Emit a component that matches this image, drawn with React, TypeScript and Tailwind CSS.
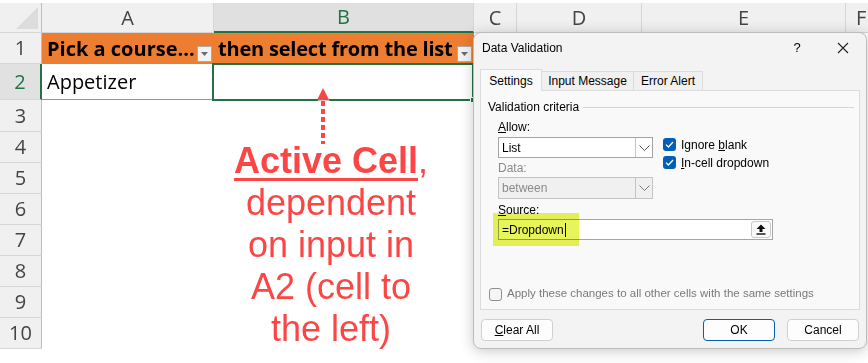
import React from "react";

const SHEET_FONT = { fontFamily: '"Open Sans", "Noto Sans", sans-serif' };
const UI_FONT = { fontFamily: '"Liberation Sans", Arial, sans-serif' };

function Chevron({ color = "#555" }: { color?: string }) {
  return (
    <svg width="11" height="6" viewBox="0 0 11 6">
      <path d="M0.5 0.5 L5.5 5.5 L10.5 0.5" fill="none" stroke={color} strokeWidth="1" />
    </svg>
  );
}

function CheckBox({ checked }: { checked: boolean }) {
  if (checked) {
    return (
      <div className="w-[13px] h-[13px] rounded-[3px] bg-[#005fb8] flex items-center justify-center shrink-0">
        <svg width="9" height="7" viewBox="0 0 9 7">
          <path d="M1 3.6 L3.4 6 L8 1" fill="none" stroke="#fff" strokeWidth="1.3" />
        </svg>
      </div>
    );
  }
  return <div className="w-[13px] h-[13px] rounded-[3px] border border-[#8f8f8f] bg-[#f5f5f5] shrink-0" />;
}

function FilterBtn() {
  return (
    <div className="w-[15px] h-[16px] bg-[#f3f3f3] border border-[#a9a9a9] flex items-center justify-center shrink-0 self-end mb-[2px] mr-[2px]">
      <svg width="7" height="4" viewBox="0 0 7 4">
        <path d="M0 0 L7 0 L3.5 4 Z" fill="#6b6b6b" />
      </svg>
    </div>
  );
}

const colHead = "bg-[#f0f0f0] border-r border-b border-[#d6d6d6] flex items-center justify-center text-[20px] text-[#444] leading-none";
const rowHead = "bg-[#f0f0f0] border-r border-r-[#bdbdbd] border-b border-b-[#d6d6d6] flex items-center justify-center text-[20px] text-[#444] leading-none";

function Sheet() {
  const rows = [3, 4, 5, 6, 7, 8, 9, 10];
  return (
    <div className="pt-[3px]" style={SHEET_FONT}>
      <div className="grid grid-cols-[42px_172px_260px_43px_125px_204px_22px] grid-rows-[30px_31px_36px_32px_repeat(7,31px)]">
        <div className="bg-[#f0f0f0] border-r border-r-[#bdbdbd] border-b border-b-[#d6d6d6] relative">
          <svg className="absolute right-[3px] bottom-[3px]" width="22" height="22" viewBox="0 0 22 22">
            <path d="M22 0 L22 22 L0 22 Z" fill="#dcdcdc" />
          </svg>
        </div>
        <div className={colHead}>A</div>
        <div className="bg-[#e0e0e0] border-r border-[#d6d6d6] border-b-2 border-b-[#217346] flex items-center justify-center text-[20px] text-[#217346] leading-none">B</div>
        <div className={colHead}>C</div>
        <div className={colHead}>D</div>
        <div className={colHead}>E</div>
        <div className="bg-[#f0f0f0] border-b border-[#d6d6d6] flex items-center pl-[10px] text-[20px] text-[#444] leading-none">F</div>

        <div className={rowHead}>1</div>
        <div className="bg-[#ed7d31] flex items-center justify-between pl-[5px] text-[20px] font-bold text-black whitespace-nowrap overflow-hidden">
          <span>Pick a course...</span>
          <FilterBtn />
        </div>
        <div className="bg-[#ed7d31] flex items-center justify-between pl-[4px] text-[20px] font-bold text-black whitespace-nowrap overflow-hidden">
          <span className="tracking-[-0.2px]">then select from the list</span>
          <FilterBtn />
        </div>
        <div className="col-span-4 bg-white" />

        <div className="bg-[#e1e1e1] border-r-2 border-r-[#217346] border-b border-b-[#d6d6d6] flex items-center justify-center text-[20px] text-[#217346] leading-none">2</div>
        <div className="bg-white border-b border-[#ed7d31] flex items-center pl-[5px] text-[20px] text-black">Appetizer</div>
        <div className="bg-white relative">
          <div className="absolute -left-[2px] -top-[1px] right-0 -bottom-[1px] border-2 border-[#217346]" />
          <div className="absolute -right-[2px] -bottom-[3px] w-[6px] h-[6px] bg-[#217346] border border-white" />
        </div>
        <div className="col-span-4 bg-white" />

        {rows.map((r) => (
          <React.Fragment key={r}>
            <div className={rowHead}>{r}</div>
            <div className="col-span-6 bg-white" />
          </React.Fragment>
        ))}
      </div>
    </div>
  );
}

function Annotation() {
  return (
    <>
      <svg className="absolute left-[315px] top-[86px]" width="16" height="60" viewBox="0 0 16 60">
        <path d="M8 2 L14 14 L2 14 Z" fill="#c9c9c9" transform="translate(0.8,1.2)" />
        <path d="M8 2 L14 14 L2 14 Z" fill="#fb4646" />
        <line x1="8" y1="15" x2="8" y2="58" stroke="#fb4646" strokeWidth="4" strokeDasharray="5 3" />
      </svg>
      <div
        className="absolute left-[181px] top-[140px] w-[300px] text-center text-[36px] leading-[42px] text-[#fb4646]"
        style={UI_FONT}
      >
        <span className="font-bold underline decoration-[3px] underline-offset-[5px]">Active Cell</span>,
        <br />
        dependent
        <br />
        on input in
        <br />
        A2 (cell to
        <br />
        the left)
      </div>
    </>
  );
}

function Combo({ value, disabled }: { value: string; disabled?: boolean }) {
  return (
    <div
      className={
        "w-[155px] flex border " +
        (disabled ? "bg-[#f0f0f0] border-[#c4c4c4] text-[#8a8a8a]" : "bg-white border-[#a5a5a5] text-black")
      }
    >
      <div className="flex-1 flex items-center pl-[3px]">{value}</div>
      <div className="w-[17px] flex items-center justify-center border-l border-[#c4c4c4]">
        <Chevron color={disabled ? "#777" : "#555"} />
      </div>
    </div>
  );
}

function Btn({ label, primary, u }: { label: string; primary?: boolean; u?: boolean }) {
  return (
    <div
      className={
        "w-[72px] h-[22px] rounded-[4px] bg-[#fdfdfd] flex items-center justify-center text-[12px] text-black border " +
        (primary ? "border-[#005fb8]" : "border-[#d0d0d0]")
      }
    >
      {u ? (
        <span>
          <span className="underline">C</span>lear All
        </span>
      ) : (
        label
      )}
    </div>
  );
}

function Dialog() {
  return (
    <div
      className="absolute left-[473px] top-[32px] w-[394px] h-[317px] rounded-[8px] border border-[#bcbcbc] bg-[#f3f3f3] shadow-[0_2px_14px_rgba(0,0,0,0.22)] flex flex-col text-[12px] text-black"
      style={UI_FONT}
    >
      <div className="h-[36px] flex items-start pt-[7px] pl-[8px] shrink-0">
        <span className="flex-1 leading-[16px]">Data Validation</span>
        <span className="w-[12px] text-[13px] leading-[16px] mr-[34px] text-center">?</span>
        <svg className="mr-[17px] mt-[2px]" width="12" height="12" viewBox="0 0 12 12">
          <path d="M1 1 L11 11 M11 1 L1 11" stroke="#222" strokeWidth="1.1" />
        </svg>
      </div>

      <div className="h-[22px] flex items-end px-[6px] shrink-0 relative z-10">
        <div className="w-[62px] h-[22px] bg-[#f9f9f9] border border-b-0 border-[#dcdcdc] flex items-center justify-center">
          Settings
        </div>
        <div className="w-[92px] h-[19px] bg-[#f0f0f0] border-t border-r border-[#dcdcdc] flex items-center justify-center mb-px">
          Input Message
        </div>
        <div className="w-[69px] h-[19px] bg-[#f0f0f0] border-t border-r border-[#dcdcdc] flex items-center justify-center mb-px">
          Error Alert
        </div>
      </div>

      <div className="mx-[6px] -mt-px h-[220px] bg-[#f9f9f9] border border-[#dcdcdc] flex flex-col relative shrink-0">
        <div className="h-[16px] mt-[8px] flex items-center pl-[7px] pr-[5px]">
          <span>Validation criteria</span>
          <div className="flex-1 h-px bg-[#d6d6d6] ml-[4px]" />
        </div>
        <div className="flex pl-[17px] mt-[4px]">
          <div className="flex flex-col w-[155px]">
            <div className="h-[16px] leading-[16px]">
              <span className="underline">A</span>llow:
            </div>
            <div className="mt-[2px] h-[21px] flex">
              <Combo value="List" />
            </div>
            <div className="mt-[2px] h-[16px] leading-[16px] text-[#8a8a8a]">Data:</div>
            <div className="mt-[1px] h-[22px] flex">
              <Combo value="between" disabled />
            </div>
          </div>
          <div className="flex flex-col ml-[10px] mt-[19px] gap-[5px]">
            <div className="flex items-center gap-[5px] h-[13px]">
              <CheckBox checked />
              <span>
                Ignore <span className="underline">b</span>lank
              </span>
            </div>
            <div className="flex items-center gap-[5px] h-[13px]">
              <CheckBox checked />
              <span>
                <span className="underline">I</span>n-cell dropdown
              </span>
            </div>
          </div>
        </div>
        <div className="pl-[17px] mt-[3px] h-[16px] leading-[16px]">
          <span className="underline">S</span>ource:
        </div>
        <div className="ml-[17px] mt-[1px] w-[275px] h-[21px] bg-white border border-[#a5a5a5] flex items-center pl-[3px] pr-px">
          <span className="flex-1 flex items-center">
            =Dropdown<span className="inline-block w-px h-[14px] bg-black ml-px" />
          </span>
          <div className="w-[20px] h-[17px] rounded-[3px] border border-[#c8c8c8] bg-[#fbfbfb] flex items-center justify-center">
            <svg width="10" height="11" viewBox="0 0 10 11">
              <path d="M5 0.5 L9.5 5 L6.5 5 L6.5 8 L3.5 8 L3.5 5 L0.5 5 Z" fill="#111" />
              <rect x="0.5" y="9.3" width="9" height="1.4" fill="#111" />
            </svg>
          </div>
        </div>
        <div className="absolute left-[12px] top-[122px] w-[86px] h-[33px] bg-[#e8f55a] mix-blend-multiply" />
        <div className="mt-auto mb-[7px] pl-[8px] flex items-center gap-[5px] h-[16px] text-[#7a7a7a]">
          <CheckBox checked={false} />
          <span className="text-[11.5px]">Apply these changes to all other cells with the same settings</span>
        </div>
      </div>

      <div className="mt-[9px] flex px-[7px]">
        <Btn label="Clear All" u />
        <div className="flex-1" />
        <Btn label="OK" primary />
        <div className="w-[12px]" />
        <Btn label="Cancel" />
      </div>
    </div>
  );
}

export default function App() {
  return (
    <div className="relative w-[868px] h-[363px] bg-white overflow-hidden">
      <Sheet />
      <Annotation />
      <Dialog />
    </div>
  );
}
